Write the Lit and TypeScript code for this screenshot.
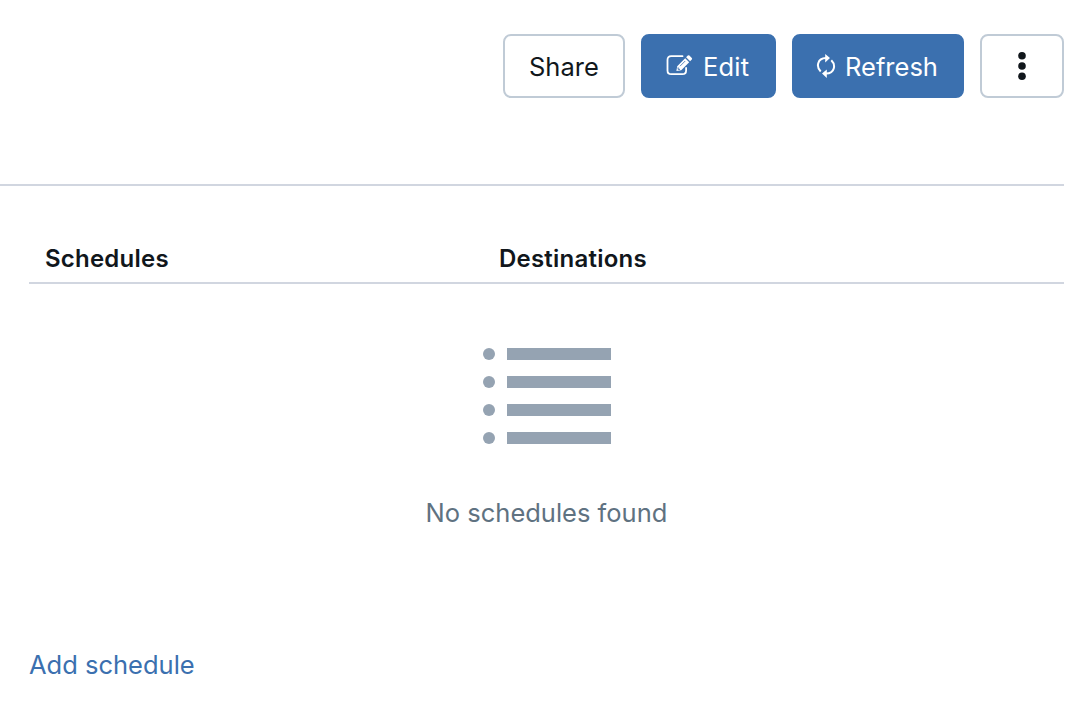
import { LitElement, html, css, svg } from "lit";
import { customElement } from "lit/decorators.js";

const ROWS = [6, 34, 62, 90];

@customElement("app-root")
export class AppRoot extends LitElement {
  static styles = css`
    :host {
      display: block;
      box-sizing: border-box;
      width: 1086px;
      height: 720px;
      overflow: hidden;
      background: #fff;
      color: #11171c;
      font-family: Inter, "Liberation Sans", sans-serif;
      font-size: 25.5px;
    }
    * { box-sizing: border-box; }
    svg { display: block; flex: none; }
    span { white-space: nowrap; }
    .toolbar {
      display: flex;
      justify-content: flex-end;
      gap: 16px;
      height: 186px;
      margin-right: 22px;
      padding-top: 34px;
      border-bottom: 2px solid #d1d6e0;
    }
    button {
      display: flex;
      align-items: center;
      height: 64px;
      padding: 0 0 0 24px;
      border: 2px solid #c0cbd6;
      border-radius: 8px;
      background: #fff;
      color: #11171c;
      font: inherit;
      line-height: 32px;
    }
    button span { padding-top: 2px; }
    .primary { border-color: #3b70af; background: #3b70af; color: #fff; }
    .share { width: 122px; }
    .edit { width: 135px; padding-left: 23px; gap: 10px; letter-spacing: 0.2px; }
    .refresh { width: 172px; padding-left: 22px; gap: 9px; }
    .more { width: 84px; padding: 0; justify-content: center; }
    .head {
      display: flex;
      height: 98px;
      margin: 0 22px 0 29px;
      padding: 57px 0 0 16px;
      border-bottom: 2px solid #d1d6e0;
      font-size: 24px;
      font-weight: 600;
      line-height: 32px;
      letter-spacing: 0.22px;
    }
    .col { width: 454px; }
    .empty {
      display: flex;
      flex-direction: column;
      align-items: center;
      margin: 0 22px 0 29px;
      padding-top: 64px;
      height: 364px;
    }
    .message { margin-top: 53px; color: #5f7281; line-height: 32px; }
    .link { display: block; margin-left: 29px; color: #3b70af; line-height: 34px; }
  `;

  render() {
    return html`
      <div class="toolbar">
        <button class="share"><span>Share</span></button>
        <button class="primary edit">
          <svg width="27" height="24" viewBox="0 0 27 24" fill="none" stroke="#fff">
            <path d="M16.5 2.2H5.2Q1.5 2.2 1.5 5.9V16.4Q1.5 20.1 5.2 20.1H16.4Q20.1 20.1 20.1 16.4V14" stroke-width="1.8" stroke-linecap="round"/>
            <path fill="#fff" stroke="none" d="M10.4 17.1L11.2 12.2L19.2 4.2L23.2 8.2L15.2 16.2ZM20.1 3.3L21.8 1.6Q22.6.9 23.4 1.6L25.8 4Q26.5 4.8 25.8 5.6L24.1 7.3Z"/>
            <path d="M14 12.2L19.2 7" stroke="#3b70af" stroke-width=".8"/>
            <path d="M12.1 13.4V15.3H14" stroke="#3b70af" stroke-width="1"/>
          </svg>
          <span>Edit</span>
        </button>
        <button class="primary refresh">
          <svg width="20" height="26" viewBox="0 0 20 26" fill="none" stroke="#fff" stroke-width="2">
            <path d="M4.7 18.5C.1 14 1 5.3 10 5.1"/>
            <path d="M15.3 7.2C19.9 11.7 19 20.4 10 20.6"/>
            <path d="M9.2 1L14 5.1L9.2 9.4ZM10.8 16.4L6 20.6L10.8 25Z" fill="#fff" stroke="none"/>
          </svg>
          <span>Refresh</span>
        </button>
        <button class="more" aria-label="More">
          <svg width="8" height="28" viewBox="0 0 8 28" fill="#11171c">
            <circle cx="4" cy="3.8" r="3.8"/><circle cx="4" cy="14" r="3.8"/><circle cx="4" cy="24.2" r="3.8"/>
          </svg>
        </button>
      </div>
      <div class="head"><span class="col">Schedules</span><span>Destinations</span></div>
      <div class="empty">
        <svg width="128" height="96" viewBox="0 0 128 96" fill="#95a3b2">
          ${ROWS.map((y) => svg`<circle cx="6" cy=${y} r="6"/><rect x="24" y=${y - 6} width="104" height="12"/>`)}
        </svg>
        <span class="message">No schedules found</span>
      </div>
      <span class="link">Add schedule</span>
    `;
  }
}
